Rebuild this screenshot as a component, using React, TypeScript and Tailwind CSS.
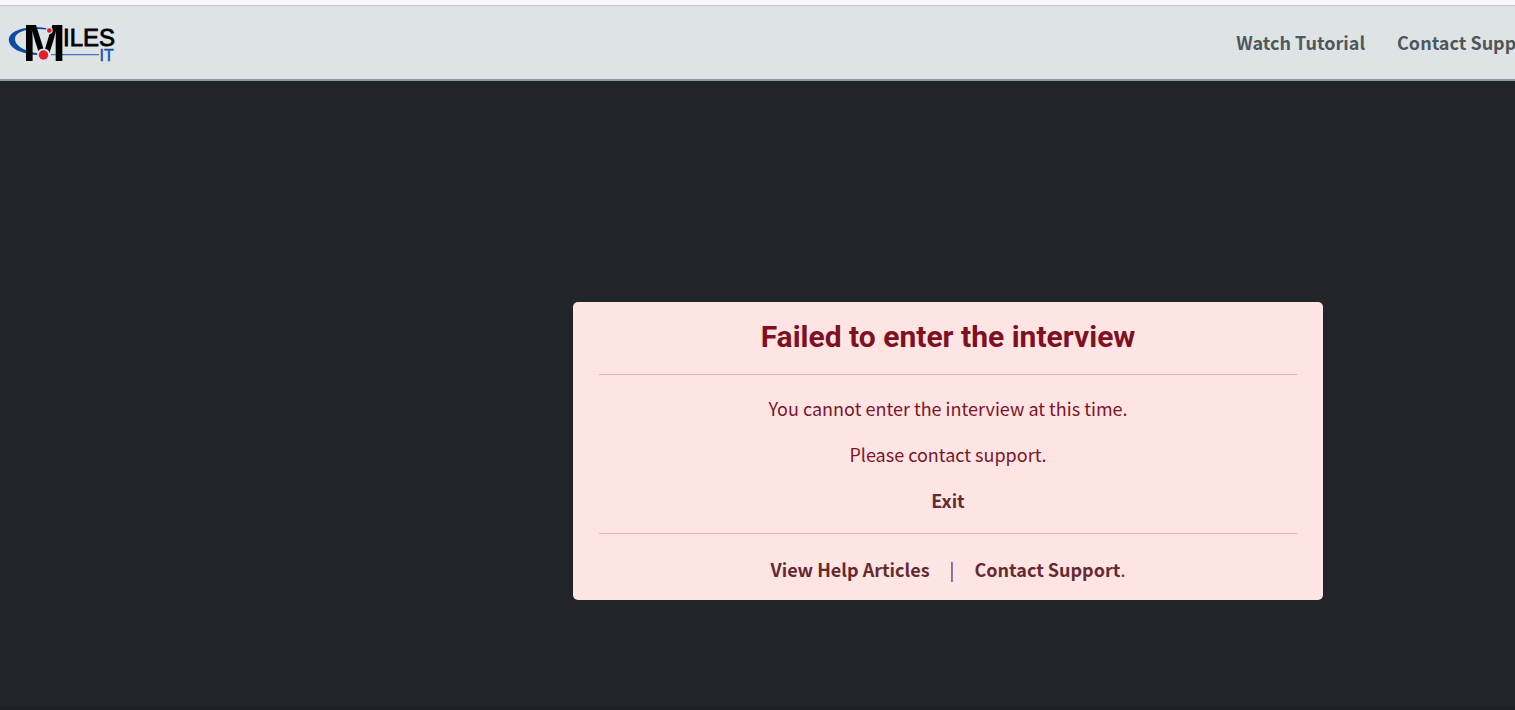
import React from "react";

const bodyFont = "font-['Noto_Sans_CJK_SC','Noto_Sans',sans-serif]";

function Logo() {
  return (
    <svg viewBox="0 0 112 44" className="h-11 w-28 shrink-0 overflow-visible" role="img" aria-label="Miles IT">
      <path
        d="M40 7.600C28 4.500 3 6 0.800 18C0 29 18 33.500 31 34.200L31 32.400C20 31 7 26 7 18C7 9 25 6.500 40 8.800Z"
        fill="#0f4da2"
      />
      <path d="M43 33.600H91" stroke="#3f78bf" strokeWidth="1.400" />
      <text x="14.500" y="39.500" fontSize="52" fontWeight="700" fontFamily="Liberation Sans, sans-serif" fill="#000">
        M
      </text>
      <circle cx="35.500" cy="34" r="6.600" fill="#dee4e5" />
      <circle cx="35.500" cy="34" r="4.700" fill="#e31b2d" />
      <circle cx="41.300" cy="9.500" r="3.400" fill="#dee4e5" />
      <circle cx="41.300" cy="9.500" r="2.300" fill="#e31b2d" />
      <text x="55" y="25" fontSize="24" fontFamily="Liberation Sans, sans-serif" fill="#000" stroke="#000" strokeWidth="0.800">
        ILES
      </text>
      <text x="91.500" y="39.500" fontSize="16" fontFamily="Liberation Sans, sans-serif" fill="#1454a8" stroke="#1454a8" strokeWidth="0.500">
        IT
      </text>
    </svg>
  );
}

export default function App() {
  return (
    <div className={`flex min-h-screen flex-col overflow-x-hidden bg-[#212529] ${bodyFont}`}>
      <div className="h-[6px] border-b border-[#c6c9cc] bg-[#f8f9fb]" />
      <header className="flex h-[75px] items-center justify-between border-b-2 border-[#8f979f] bg-[#dee4e5] pl-2">
        <a href="#home">
          <Logo />
        </a>
        <nav className="-mr-7 flex gap-8 pb-0.5 whitespace-nowrap text-[18px] leading-7 font-bold text-[#4f575c]">
          <a href="#tutorial">Watch Tutorial</a>
          <a href="#support">Contact Support</a>
        </nav>
      </header>
      <main className="flex flex-1 items-start justify-center pt-[221px] pb-[106px] pl-[381px]">
        <section
          role="alert"
          className="w-full max-w-[750px] rounded-[5px] bg-[#ffe4e4] px-[26px] pt-4 pb-4 text-center text-[18px] leading-[30px] text-[#7c1528]"
        >
          <h1 className="font-[Roboto,sans-serif] text-[30px] leading-[38px] font-bold text-[#7f1022]">
            Failed to enter the interview
          </h1>
          <hr className="my-[18px] border-[#ecb1b9]" />
          <div className="flex flex-col gap-4">
            <p>You cannot enter the interview at this time.</p>
            <p>Please contact support.</p>
            <p>
              <a href="#exit" className="font-bold text-[#642a30]">
                Exit
              </a>
            </p>
          </div>
          <hr className="mt-[18px] mb-5 border-[#ecb1b9]" />
          <div className="flex justify-center">
            <a href="#articles" className="font-bold text-[#642a30]">
              View Help Articles
            </a>
            <span className="px-5">|</span>
            <a href="#contact" className="font-bold text-[#642a30]">
              Contact Support
            </a>
            <span>.</span>
          </div>
        </section>
      </main>
      <footer className="h-1 bg-[#1f2126]" />
    </div>
  );
}
